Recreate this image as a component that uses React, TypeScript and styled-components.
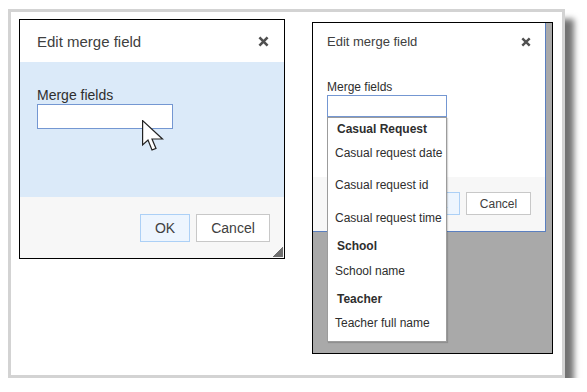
import styled, { createGlobalStyle } from 'styled-components';

const GlobalStyle = createGlobalStyle`
  body {
    margin: 0;
    background: #ffffff;
    font-family: "Liberation Sans", Arial, sans-serif;
  }
`;

const Page = styled.div`
  padding: 9px 0 0 8px;
`;

const Frame = styled.div`
  box-sizing: border-box;
  width: 557px;
  height: 369px;
  border: 3px solid #d3d3d3;
  background: #ffffff;
  box-shadow: 9px 10px 6px rgba(0, 0, 0, 0.55);
  display: flex;
  align-items: flex-start;
  gap: 27px;
  padding: 7px 0 0 8px;
`;

/* ---------- left dialog (hovered state) ---------- */

const DialogBox = styled.div`
  box-sizing: border-box;
  position: relative;
  width: 266px;
  height: 240px;
  border: 1px solid #000;
  background: #fff;
  display: flex;
  flex-direction: column;
`;

const Header = styled.div<{ $h: number; $pl: number; $pr: number }>`
  height: ${(p) => p.$h}px;
  padding: 0 ${(p) => p.$pr}px 0 ${(p) => p.$pl}px;
  display: flex;
  align-items: center;
  justify-content: space-between;
  flex-shrink: 0;
`;

const Title = styled.span<{ $size: number }>`
  font-size: ${(p) => p.$size}px;
  color: #404040;
`;

const Body = styled.div<{ $h: number; $pt: number; $pl: number; $bg: string }>`
  box-sizing: border-box;
  height: ${(p) => p.$h}px;
  padding: ${(p) => p.$pt}px 0 0 ${(p) => p.$pl}px;
  background: ${(p) => p.$bg};
  flex-shrink: 0;
`;

const Label = styled.div<{ $size: number }>`
  font-size: ${(p) => p.$size}px;
  line-height: ${(p) => p.$size + 2}px;
  color: #2e2e2e;
  margin-bottom: 1px;
`;

const Input = styled.div<{ $w: number; $h: number }>`
  box-sizing: border-box;
  width: ${(p) => p.$w}px;
  height: ${(p) => p.$h}px;
  border: 1px solid #7497d2;
  background: #fff;
`;

const Footer = styled.div<{ $pt: number; $pr: number }>`
  flex: 1;
  background: #f7f7f7;
  display: flex;
  justify-content: flex-end;
  align-items: flex-start;
  gap: 6px;
  padding: ${(p) => p.$pt}px ${(p) => p.$pr}px 0 0;
`;

const Button = styled.div<{ $w: number; $h: number; $size: number; $primary?: boolean }>`
  box-sizing: border-box;
  width: ${(p) => p.$w}px;
  height: ${(p) => p.$h}px;
  display: flex;
  align-items: center;
  justify-content: center;
  font-size: ${(p) => p.$size}px;
  color: #404040;
  background: ${(p) => (p.$primary ? '#edf5fe' : '#ffffff')};
  border: 1px solid ${(p) => (p.$primary ? '#acd0f6' : '#c8c8c8')};
`;

const Grip = styled.div<{ $s: number }>`
  position: absolute;
  right: 1px;
  bottom: 1px;
  width: ${(p) => p.$s}px;
  height: ${(p) => p.$s}px;
  background: linear-gradient(135deg, transparent 50%, #6f6f6f 50%);
`;

const Pointer = styled.svg`
  position: absolute;
  left: 122px;
  top: 100px;
`;

/* ---------- right screenshot (dropdown open) ---------- */

const Shot = styled.div`
  box-sizing: border-box;
  position: relative;
  width: 241px;
  height: 332px;
  margin-top: 3px;
  border: 1px solid #000;
  background: #a9a9a9;
`;

const SmallDialog = styled.div`
  box-sizing: border-box;
  width: 233px;
  height: 209px;
  background: #fff;
  border-right: 1px solid #5a7fc0;
  border-bottom: 1px solid #5a7fc0;
  display: flex;
  flex-direction: column;
`;

const Dropdown = styled.div`
  box-sizing: border-box;
  position: absolute;
  left: 14px;
  top: 94px;
  width: 120px;
  height: 225px;
  background: #fff;
  border: 1px solid #9c9c9c;
  box-shadow: 1px 1px 1px rgba(0, 0, 0, 0.15);
`;

const Option = styled.div<{ $h: number; $group?: boolean }>`
  height: ${(p) => p.$h}px;
  display: flex;
  align-items: center;
  padding-left: ${(p) => (p.$group ? 9 : 7)}px;
  font-size: 12px;
  font-weight: ${(p) => (p.$group ? 700 : 400)};
  color: #2e2e2e;
  white-space: nowrap;
`;

function CloseIcon({ size }: { size: number }) {
  return (
    <svg width={size} height={size} viewBox="0 0 10 10">
      <path d="M1.3 1.3 L8.7 8.7 M8.7 1.3 L1.3 8.7" stroke="#505050" strokeWidth="2.4" strokeLinecap="butt" />
    </svg>
  );
}

const options: { text: string; h: number; group?: boolean }[] = [
  { text: 'Casual Request', h: 22, group: true },
  { text: 'Casual request date', h: 26 },
  { text: 'Casual request id', h: 38 },
  { text: 'Casual request time', h: 28 },
  { text: 'School', h: 28, group: true },
  { text: 'School name', h: 22 },
  { text: 'Teacher', h: 34, group: true },
  { text: 'Teacher full name', h: 14 },
];

export default function App() {
  return (
    <>
      <GlobalStyle />
      <Page>
        <Frame>
          <DialogBox>
            <Header $h={42} $pl={17} $pr={15}>
              <Title $size={15}>Edit merge field</Title>
              <CloseIcon size={11} />
            </Header>
            <Body $h={135} $pt={25} $pl={17} $bg="#dbeaf9">
              <Label $size={14}>Merge fields</Label>
              <Input $w={136} $h={25} />
            </Body>
            <Footer $pt={17} $pr={14}>
              <Button $w={50} $h={28} $size={14} $primary>
                OK
              </Button>
              <Button $w={74} $h={28} $size={14}>
                Cancel
              </Button>
            </Footer>
            <Grip $s={10} />
            <Pointer width="23" height="33" viewBox="0 0 23 33">
              <path
                d="M0.6 0.6 L0.6 25 L6 20 L10 30 L14 28.4 L10 19 L20.5 19 Z"
                fill="#fff"
                stroke="#222"
                strokeWidth="1.2"
                strokeLinejoin="miter"
              />
            </Pointer>
          </DialogBox>

          <Shot>
            <SmallDialog>
              <Header $h={37} $pl={14} $pr={14}>
                <Title $size={13}>Edit merge field</Title>
                <CloseIcon size={10} />
              </Header>
              <Body $h={117} $pt={20} $pl={14} $bg="#ffffff">
                <Label $size={12}>Merge fields</Label>
                <Input $w={120} $h={22} />
              </Body>
              <Footer $pt={15} $pr={14}>
                <Button $w={43} $h={23} $size={12} $primary>
                  OK
                </Button>
                <Button $w={65} $h={23} $size={12}>
                  Cancel
                </Button>
              </Footer>
            </SmallDialog>
            <Dropdown>
              {options.map((o) => (
                <Option key={o.text} $h={o.h} $group={o.group}>
                  {o.text}
                </Option>
              ))}
            </Dropdown>
          </Shot>
        </Frame>
      </Page>
    </>
  );
}
